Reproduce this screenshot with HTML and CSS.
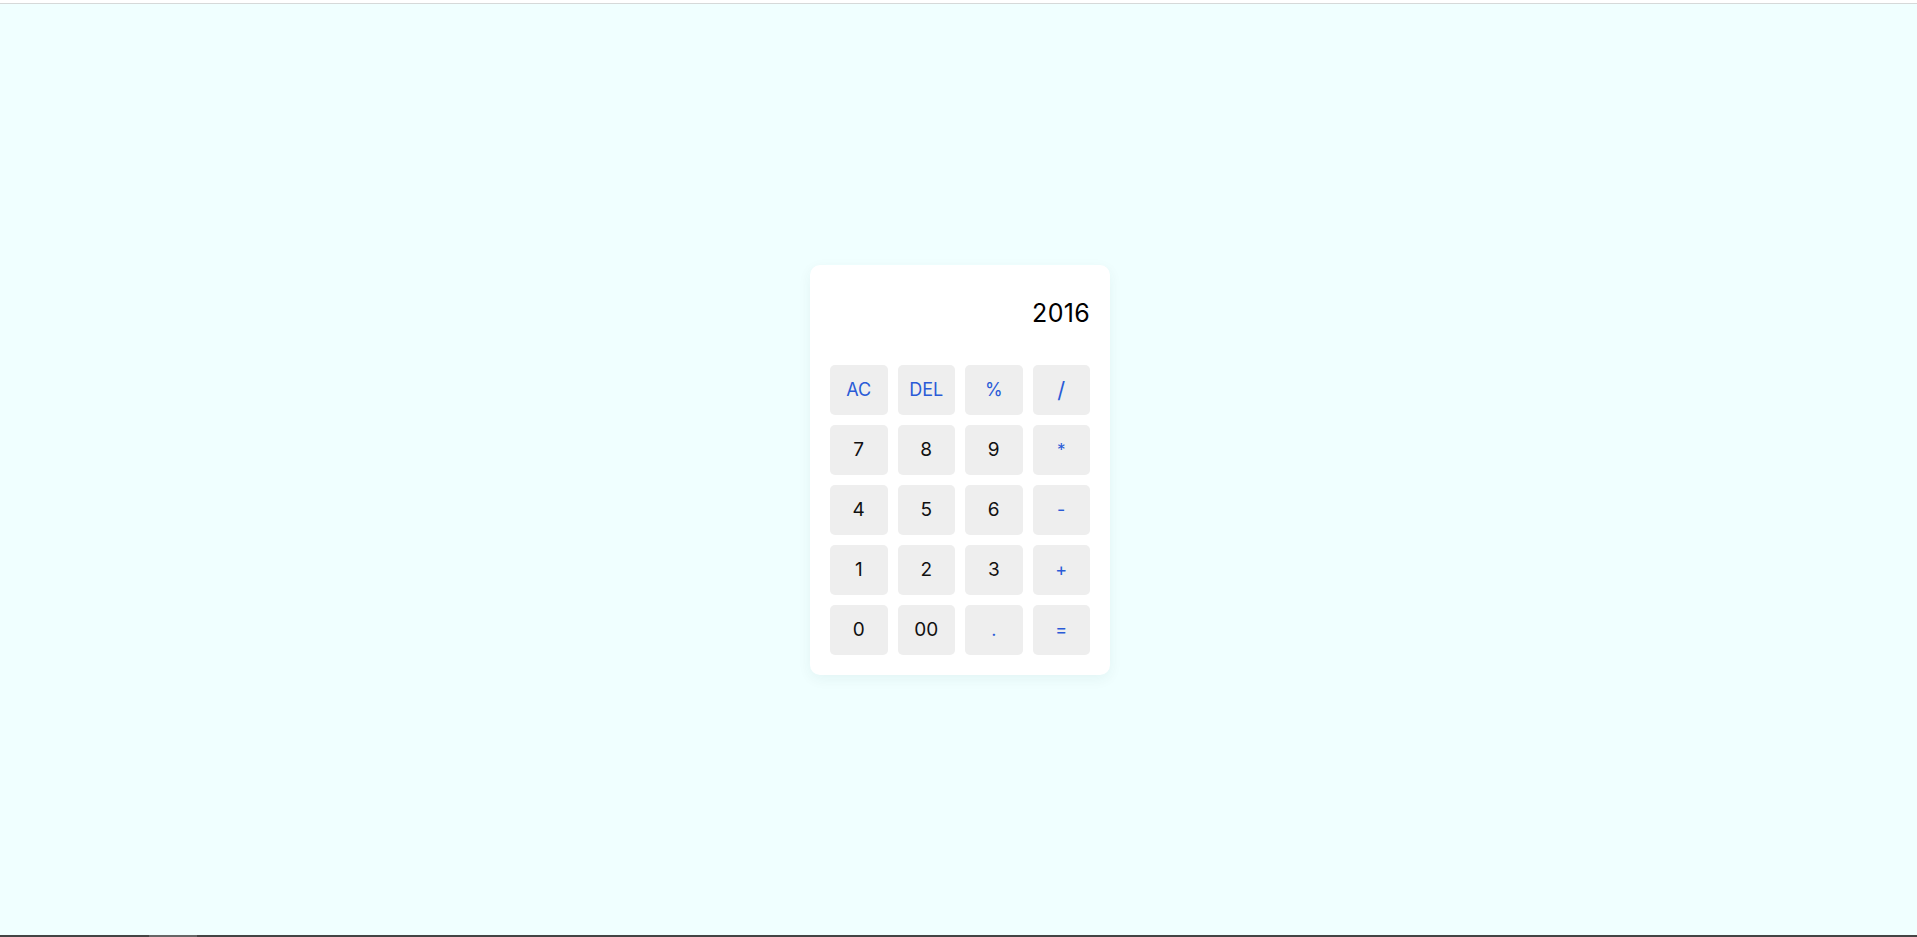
FILE: index.html
```html
<!DOCTYPE html>
<html lang="en">
<head>
<meta charset="utf-8">
<title>Calculator</title>
<link rel="stylesheet" href="styles.css">
</head>
<body>
<div class="top-strip"></div>
<main class="stage">
  <div class="calculator">
    <div class="display">2016</div>
    <div class="keys">
      <button class="key op">AC</button>
      <button class="key op">DEL</button>
      <button class="key op">%</button>
      <button class="key op slash">/</button>
      <button class="key">7</button>
      <button class="key">8</button>
      <button class="key">9</button>
      <button class="key op star">*</button>
      <button class="key">4</button>
      <button class="key">5</button>
      <button class="key">6</button>
      <button class="key op">-</button>
      <button class="key">1</button>
      <button class="key">2</button>
      <button class="key">3</button>
      <button class="key op">+</button>
      <button class="key">0</button>
      <button class="key">00</button>
      <button class="key op">.</button>
      <button class="key op">=</button>
    </div>
  </div>
</main>
<div class="bottom-strip"><span class="thumb"></span></div>
</body>
</html>
```

FILE: styles.css
```css
* { box-sizing: border-box; }
html, body { margin: 0; padding: 0; }
body {
  height: 100vh;
  display: flex;
  flex-direction: column;
  background: #f0ffff;
  font-family: "Inter", "Lato", sans-serif;
}
.top-strip {
  height: 4px;
  background: #ffffff;
  border-bottom: 1px solid #d6d9d9;
  flex: none;
}
.stage {
  flex: 1;
  display: flex;
  align-items: center;
  justify-content: center;
  padding-left: 3px;
}
.bottom-strip {
  height: 2px;
  background: #444444;
  flex: none;
  display: flex;
}
.thumb {
  margin-left: 149px;
  width: 48px;
  background: #666666;
}
.calculator {
  width: 300px;
  background: #ffffff;
  border-radius: 10px;
  padding: 20px;
  box-shadow: 0 4px 14px rgba(0, 60, 60, 0.06);
}
.display {
  height: 60px;
  line-height: 56px;
  margin-bottom: 20px;
  text-align: right;
  font-size: 25px;
  letter-spacing: 0.3px;
  color: #000;
}
.keys {
  display: grid;
  grid-template-columns: repeat(4, 1fr);
  gap: 10px;
}
.key {
  height: 50px;
  border: none;
  border-radius: 5px;
  background: #eeeeee;
  font-family: inherit;
  font-size: 19px;
  color: #111;
  padding: 0;
}
.key.op { color: #2a5bd7; font-size: 18px; }
.key.slash { font-size: 22px; }
.key.star { font-size: 17px; }
```
